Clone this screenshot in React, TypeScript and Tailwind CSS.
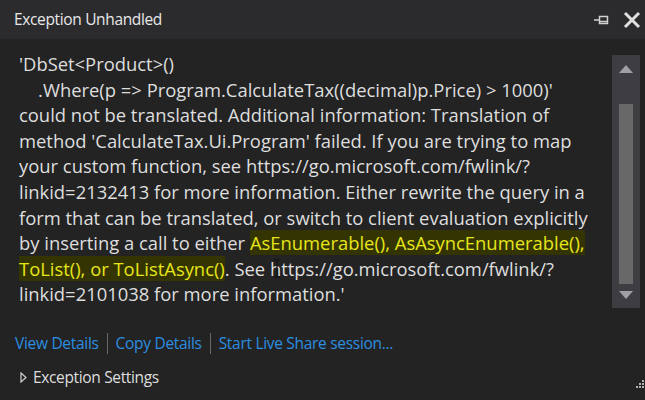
import React from 'react';

const Hl: React.FC<{ children: React.ReactNode }> = ({ children }) => (
  <span className="bg-[#343403] text-[#e6e61a]">{children}</span>
);

const App: React.FC = () => {
  return (
    <div
      className="w-[645px] h-[400px] bg-[#232324] text-[#dedede] overflow-hidden flex flex-col"
      style={{ fontFamily: '"Open Sans", "Noto Sans", sans-serif' }}
    >
      {/* title bar */}
      <div className="h-[39px] bg-[#2b2b2e] flex items-center pl-[14px] pr-[4px] shrink-0">
        <span className="text-[15.5px] text-[#e8e8e8] tracking-[-0.35px]">Exception Unhandled</span>
        <div className="ml-auto flex items-center gap-[10px]">
          <svg width="20" height="12" viewBox="0 0 20 12">
            <path d="M1 6 H6" stroke="#d0d0d0" strokeWidth="1.5" />
            <rect x="6.5" y="2.5" width="8" height="7" fill="none" stroke="#d0d0d0" strokeWidth="1.5" />
            <path d="M6.5 7.5 H14.5" stroke="#d0d0d0" strokeWidth="1.5" />
          </svg>
          <svg width="18" height="18" viewBox="0 0 18 18">
            <path d="M2 2 L16 16 M16 2 L2 16" stroke="#e0e0e0" strokeWidth="3" />
          </svg>
        </div>
      </div>

      {/* message + scrollbar */}
      <div className="flex pt-[12px] pr-[5px]">
        <div className="flex-1 pl-[19px] text-[18.4px] leading-[25.6px] whitespace-nowrap">
          'DbSet&lt;Product&gt;()
          <br />
          &nbsp;&nbsp;&nbsp;&nbsp;.Where(p =&gt; Program.CalculateTax((decimal)p.Price) &gt; 1000)'
          <br />
          could not be translated. Additional information: Translation of
          <br />
          method 'CalculateTax.Ui.Program' failed. If you are trying to map
          <br />
          your custom function, see https://go.microsoft.com/fwlink/?
          <br />
          linkid=2132413 for more information. Either rewrite the query in a
          <br />
          form that can be translated, or switch to client evaluation explicitly
          <br />
          by inserting a call to either <Hl>AsEnumerable(), AsAsyncEnumerable(),</Hl>
          <br />
          <span className="relative">
            <Hl>ToList(), or ToListAsync()</Hl>. See https://go.microsoft.com/fwlink/?
            <svg className="absolute left-[254px] top-[3px]" width="8" height="19" viewBox="0 0 8 19">
              <path d="M1 1 H7 M4 1 V18 M1 18 H7" stroke="#111" strokeWidth="1.2" fill="none" />
            </svg>
          </span>
          <br />
          linkid=2101038 for more information.'
        </div>
        <div className="w-[28px] h-[253px] mt-[4px] bg-[#3e3e42] flex flex-col items-center pt-[10px]">
          <svg width="14" height="8" viewBox="0 0 14 8">
            <path d="M0 8 L7 0 L14 8 Z" fill="#a0a0a4" />
          </svg>
          <div className="w-[14px] h-[180px] bg-[#686868] mt-[31px]" />
          <svg className="mt-[7px]" width="14" height="8" viewBox="0 0 14 8">
            <path d="M0 0 L7 8 L14 0 Z" fill="#a0a0a4" />
          </svg>
        </div>
      </div>

      {/* links */}
      <div className="flex items-center pl-[15px] mt-[24px] text-[15.5px] text-[#2b8ee0] tracking-[-0.3px]">
        <span>View Details</span>
        <span className="mx-[8px] w-px h-[21px] bg-[#6a6a6a]" />
        <span>Copy Details</span>
        <span className="mx-[8px] w-px h-[21px] bg-[#6a6a6a]" />
        <span>Start Live Share session...</span>
      </div>

      {/* settings */}
      <div className="flex items-center pl-[20px] mt-[8px] text-[15.5px] tracking-[-0.35px]">
        <svg width="7" height="11" viewBox="0 0 7 11" className="mr-[6px]">
          <path d="M1 1 L6 5.5 L1 10 Z" fill="none" stroke="#cfcfcf" strokeWidth="1.2" />
        </svg>
        <span>Exception Settings</span>
        <svg className="ml-auto mt-[14px]" width="14" height="14" viewBox="0 0 14 14">
          <rect x="11" y="3" width="2" height="2" fill="#b0b0b0" />
          <rect x="8" y="6" width="2" height="2" fill="#b0b0b0" />
          <rect x="11" y="6" width="2" height="2" fill="#b0b0b0" />
          <rect x="5" y="9" width="2" height="2" fill="#b0b0b0" />
          <rect x="8" y="9" width="2" height="2" fill="#b0b0b0" />
          <rect x="11" y="9" width="2" height="2" fill="#b0b0b0" />
        </svg>
      </div>
    </div>
  );
};

export default App;
